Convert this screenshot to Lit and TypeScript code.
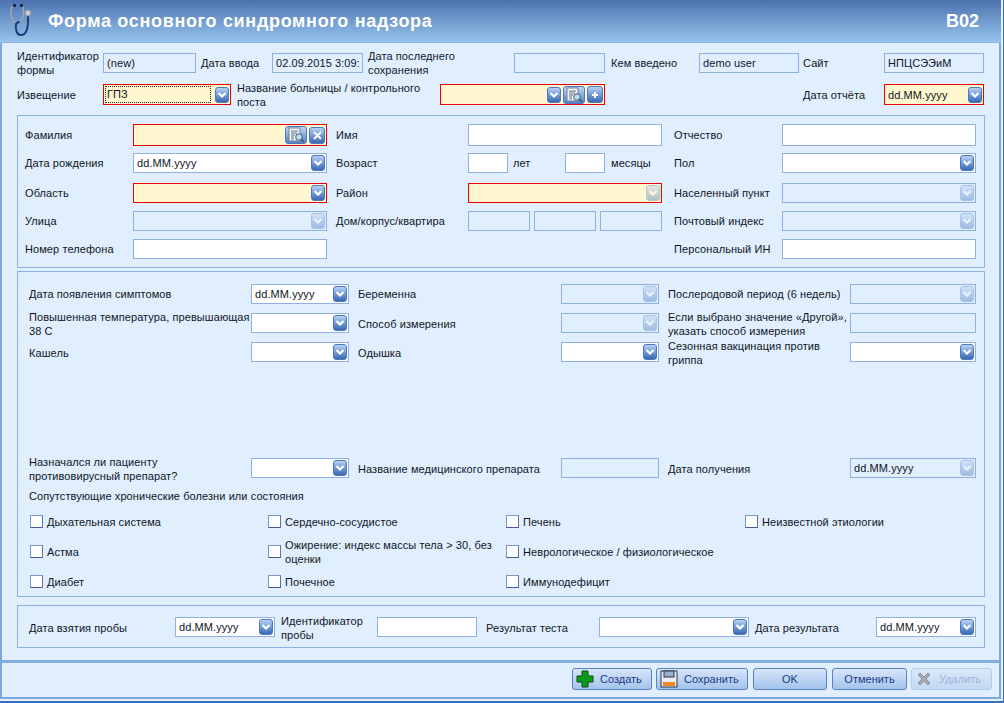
import { LitElement, html, css, svg } from "lit";
import { customElement } from "lit/decorators.js";

const searchIcon = html`<svg width="20" height="16" viewBox="0 0 20 16"><rect x="3" y="1" width="11" height="13" fill="#f4f7fb" stroke="#6d7f98"/><path d="M5 4h7M5 6h6M5 8h4M5 10h3M5 12h3" stroke="#5a6a82"/><circle cx="13" cy="10" r="3.200" fill="#bfe0f2" stroke="#5b7590" stroke-width="1.200"/><path d="M15 12l3 3" stroke="#3d5069" stroke-width="1.600"/></svg>`;
const chevron = html`<svg width="10" height="8" viewBox="0 0 10 8"><path d="M1.500 2 L5 5.500 L8.500 2" fill="none" stroke="#fff" stroke-width="2.200"/></svg>`;
const xIcon = html`<svg width="9" height="9" viewBox="0 0 9 9"><path d="M1 1L8 8M8 1L1 8" stroke="#fff" stroke-width="1.800"/></svg>`;
const plusSmall = html`<svg width="8" height="8" viewBox="0 0 8 8"><path d="M4 1v6M1 4h6" stroke="#fff" stroke-width="2"/></svg>`;

@customElement("app-root")
export class AppRoot extends LitElement {
  static styles = css`
    :host { display: block; width: 1004px; height: 703px; overflow: hidden; background: #e6f1fd;
      font: 11px "Liberation Sans", Arial, sans-serif; color: #10161f; letter-spacing: 0.08px; }
    * { box-sizing: border-box; }
    .outer { width: 1004px; height: 703px; border-right: 1px solid #3f6fb4; border-bottom: 2px solid #3f6fb4; padding: 0 2px 2px 0; }
    .win { height: 699px; border-left: 2px solid #7aa9e2; border-right: 2px solid #7aa9e2; border-bottom: 2px solid #7aa9e2; background: #e0eefd; display: flex; flex-direction: column; }
    .head { height: 43px; margin: 0 -2px; padding: 0 22px 0 48px; flex: none; display: flex; align-items: center; justify-content: space-between; color: #fff; font-size: 18px; font-weight: 700; letter-spacing: 0.68px;
      background: linear-gradient(#4c72af, #96c4ec); border-bottom: 1px solid #8db5e6; position: relative; }
    .head svg { position: absolute; left: 0; top: 0; }
    .head .code { font-size: 18px; letter-spacing: 0; }
    .body { padding: 10px 14px 0 15px; }

    .row { display: grid; align-items: center; grid-template-rows: 20px; }
    .row.tall { grid-template-rows: 22px; }
    .lbl { line-height: 14px; }
    .lo .lbl { padding-top: 2px; }
    .f { display: flex; align-items: center; height: 100%; border: 1px solid #8eb0e3; padding: 0 3px 0 3px; background: #e0eefd; gap: 2px; overflow: hidden; white-space: nowrap; }
    .f .v { flex: 1; overflow: hidden; }
    .f.w { background: #fff; }
    .f.req { background: #fff7cf; border-color: #f00000; }
    .dot { outline: 1px dotted #222; outline-offset: -1px; margin: 1px 2px 1px -2px; padding-left: 2px; height: 17px; line-height: 16px; }
    .btn { flex: none; width: 14px; height: 16px; border-radius: 3px; border: 1px solid #4d78ba; display: flex; align-items: center; justify-content: center; background: linear-gradient(#b9d2f2 0, #7fa6de 40%, #3a68b2 100%); }
    .btn.dis { opacity: .38; }
    .btn.wide { width: 22px; height: 18px; background: linear-gradient(#c2d7f3, #7ea3d9 60%, #5681c2); }
    .btn.sq { width: 16px; height: 17px; }
    .f.np { padding-right: 1px; }

    .r1 { grid-template-columns: 86px 93px 76px 91px 151px 91px 94px 100px 85px 100px; }
    .r2 { grid-template-columns: 86px 128px 209px 165px 198px 81px 100px; grid-template-rows: 21px; margin-top: 11px; }
    .pl5 { padding-left: 5px; } .pl6 { padding-left: 6px; } .pl4 { padding-left: 4px; } .pl9 { padding-left: 9px; } .pl12 { padding-left: 12px; }

    .panel { border: 1px solid #8eb0e3; }
    .p1 { margin-top: 10px; padding: 8px 7px 8px 7px; }
    .p1 .row { grid-template-columns: 108px 194px 141px 194px 120px 194px; }
    .m7 { margin-top: 7px; } .m8 { margin-top: 8px; } .m10 { margin-top: 10px; } .m9 { margin-top: 9px; } .m96 { margin-top: 96px; } .m11 { margin-top: 11px; }
    .age { display: grid; grid-template-columns: 40px 57px 40px 57px; align-items: center; height: 100%; }
    .house { display: grid; grid-template-columns: 62px 62px 62px; gap: 4px; height: 100%; }

    .p2 { margin-top: 3px; padding: 12px 7px 8px 11px; }
    .p2 .row { grid-template-columns: 222px 98px 212px 98px 191px 126px; }
    .chk { display: grid; grid-template-columns: 238px 238px 239px 220px; margin-left: 1px; align-items: center; }
    .ci { display: flex; align-items: center; gap: 4px; line-height: 14px; }
    .ci .t { padding-top: 1px; }
    .box { flex: none; width: 13px; height: 13px; background: #fff; border: 1px solid #7d96c8; border-right-color: #5a72b0; border-bottom-color: #44589e; }
    .h14 { height: 14px; } .h28 { height: 28px; }

    .p3 { margin-top: 8px; padding: 11px 7px 10px 11px; }
    .p3 .row { grid-template-columns: 146px 100px 102px 100px 122px 150px 127px 100px; }

    .sep { height: 3px; background: #84aee2; margin-top: 12px; flex: none; }
    .foot { display: flex; padding: 5px 7px 0 0; justify-content: flex-end; flex: none; }
    .b { height: 22px; border: 1px solid #5a82c4; border-radius: 3px; background: linear-gradient(#d6e5f9, #a4c4ec); color: #1d3a86; display: flex; align-items: center; justify-content: flex-start; padding-left: 3px; gap: 6px; margin-left: 4px; letter-spacing: 0; }
    .b.c { justify-content: center; padding-left: 0; }
    .b.dis { border-color: #b4cbe9; background: linear-gradient(#dbe8f9, #c2d8f2); color: #9db4d8; }
    .ml5 { margin-left: 5px; }
    .w80 { width: 80px; } .w92 { width: 92px; } .w74 { width: 74px; } .w75 { width: 75px; } .w81 { width: 81px; }
  `;

  private lbl(t: string, cls = "") { return html`<div class="lbl ${cls}">${t}</div>`; }
  private inp(v = "", cls = "") { return html`<div class="f ${cls}"><span class="v">${v}</span></div>`; }
  private sel(v = "", cls = "w") {
    return html`<div class="f np ${cls}"><span class="v">${v}</span><span class="btn ${cls === "" ? "dis" : ""}">${chevron}</span></div>`;
  }
  private dis() { return this.sel("", ""); }
  private cb(t: string) { return html`<div class="ci"><span class="box"></span><span class="t">${t}</span></div>`; }

  render() {
    return html`<div class="outer"><div class="win">
      <div class="head">
        <svg width="34" height="40" viewBox="0 0 34 40" fill="none">
          <path d="M15 5C11 6 10 12 11 16C12 20 14 22 16 24" stroke="#9aa6b3" stroke-width="1.600"/>
          <path d="M21 5C24 7 24 13 23 17C22.500 19 21 20.500 19.500 21.500" stroke="#9aa6b3" stroke-width="1.600"/>
          <path d="M19.500 21.500C18 22.500 17 23 16 24C15 30 17 35 21 35C27 35 28 28 28 20V16" stroke="#1d3f78" stroke-width="2"/>
          <rect x="13" y="4" width="3" height="3" fill="#1b2a44"/><rect x="20" y="4" width="3" height="3" fill="#1b2a44"/>
          <circle cx="28" cy="13" r="3" fill="#c8ced4" stroke="#8d98a6"/>
        </svg>
        <span>Форма основного синдромного надзора</span><span class="code">B02</span>
      </div>
      <div class="body">
        <div class="row r1">
          ${this.lbl("Идентификатор формы")}${this.inp("(new)")}${this.lbl("Дата ввода", "pl5")}${this.inp("02.09.2015 3:09:33")}
          ${this.lbl("Дата последнего сохранения", "pl5")}${this.inp()}${this.lbl("Кем введено", "pl6")}${this.inp("demo user")}
          ${this.lbl("Сайт", "pl4")}${this.inp("НПЦСЭЭиМ")}
        </div>
        <div class="row r2">
          ${this.lbl("Извещение")}
          <div class="f np req"><span class="v dot">ГПЗ</span><span class="btn">${chevron}</span></div>
          ${this.lbl("Название больницы / контрольного поста", "pl6")}
          <div class="f np req"><span class="v"></span><span class="btn">${chevron}</span><span class="btn wide">${searchIcon}</span><span class="btn sq">${plusSmall}</span></div>
          <div></div>
          ${this.lbl("Дата отчёта")}
          ${this.sel("dd.MM.yyyy", "req")}
        </div>
        <div class="panel p1">
          <div class="row tall">
            ${this.lbl("Фамилия")}
            <div class="f np req"><span class="v"></span><span class="btn wide">${searchIcon}</span><span class="btn sq">${xIcon}</span></div>
            ${this.lbl("Имя", "pl9")}${this.inp("", "w")}${this.lbl("Отчество", "pl12")}${this.inp("", "w")}
          </div>
          <div class="row m7">
            ${this.lbl("Дата рождения")}${this.sel("dd.MM.yyyy")}${this.lbl("Возраст", "pl9")}
            <div class="age">${this.inp("", "w")}${this.lbl("лет", "pl5")}${this.inp("", "w")}${this.lbl("месяцы", "pl6")}</div>
            ${this.lbl("Пол", "pl12")}${this.sel()}
          </div>
          <div class="row m10">
            ${this.lbl("Область")}${this.sel("", "req")}${this.lbl("Район", "pl9")}
            <div class="f np req"><span class="v"></span><span class="btn dis">${chevron}</span></div>
            ${this.lbl("Населенный пункт", "pl12")}${this.dis()}
          </div>
          <div class="row m8">
            ${this.lbl("Улица")}${this.dis()}${this.lbl("Дом/корпус/квартира", "pl9")}
            <div class="house">${this.inp()}${this.inp()}${this.inp()}</div>
            ${this.lbl("Почтовый индекс", "pl12")}${this.dis()}
          </div>
          <div class="row m8">
            ${this.lbl("Номер телефона")}${this.inp("", "w")}<div></div><div></div>${this.lbl("Персональный ИН", "pl12")}${this.inp("", "w")}
          </div>
        </div>
        <div class="panel p2">
          <div class="row">
            ${this.lbl("Дата появления симптомов")}${this.sel("dd.MM.yyyy")}${this.lbl("Беременна", "pl9")}${this.dis()}
            ${this.lbl("Послеродовой период (6 недель)", "pl9")}${this.dis()}
          </div>
          <div class="row lo m9">
            ${this.lbl("Повышенная температура, превышающая 38 С")}${this.sel()}${this.lbl("Способ измерения", "pl9")}${this.dis()}
            ${this.lbl("Если выбрано значение «Другой», указать способ измерения", "pl9")}${this.inp()}
          </div>
          <div class="row lo m9">
            ${this.lbl("Кашель")}${this.sel()}${this.lbl("Одышка", "pl9")}${this.sel()}
            ${this.lbl("Сезонная вакцинация против гриппа", "pl9")}${this.sel()}
          </div>
          <div class="row lo m96">
            ${this.lbl("Назначался ли пациенту противовирусный препарат?")}${this.sel()}${this.lbl("Название медицинского препарата", "pl9")}${this.inp()}
            ${this.lbl("Дата получения", "pl9")}${this.sel("dd.MM.yyyy", "")}
          </div>
          ${this.lbl("Сопутствующие хронические болезни или состояния", "m11")}
          <div class="chk h14 m11">${this.cb("Дыхательная система")}${this.cb("Сердечно-сосудистое")}${this.cb("Печень")}${this.cb("Неизвестной этиологии")}</div>
          <div class="chk h28 m9">${this.cb("Астма")}${this.cb("Ожирение: индекс массы тела > 30, без оценки")}${this.cb("Неврологическое / физиологическое")}<div></div></div>
          <div class="chk h14 m9">${this.cb("Диабет")}${this.cb("Почечное")}${this.cb("Иммунодефицит")}<div></div></div>
        </div>
        <div class="panel p3">
          <div class="row lo">
            ${this.lbl("Дата взятия пробы")}${this.sel("dd.MM.yyyy")}${this.lbl("Идентификатор пробы", "pl6")}${this.inp("", "w")}
            ${this.lbl("Результат теста", "pl9")}${this.sel()}${this.lbl("Дата результата", "pl6")}${this.sel("dd.MM.yyyy")}
          </div>
        </div>
      </div>
      <div class="sep"></div>
      <div class="foot">
        <div class="b w80"><svg width="18" height="18" viewBox="0 0 18 18">${svg`<path d="M6 1h6v5h5v6h-5v5H6v-5H1V6h5z" fill="#0c9a1c" stroke="#0a4a10"/>`}</svg>Создать</div>
        <div class="b w92"><svg width="18" height="18" viewBox="0 0 18 18">${svg`<rect x="1" y="1" width="16" height="16" fill="#e9eef5" stroke="#24364f"/><rect x="4" y="1" width="10" height="6" fill="#9bb0c8" stroke="#24364f"/><rect x="3" y="12" width="12" height="4" fill="#f28a1e"/>`}</svg>Сохранить</div>
        <div class="b c w74 ml5">OK</div>
        <div class="b c w75 ml5">Отменить</div>
        <div class="b w81 dis"><svg width="18" height="18" viewBox="0 0 18 18">${svg`<path d="M3 5l2-2 4 4 4-4 2 2-4 4 4 4-2 2-4-4-4 4-2-2 4-4z" fill="#a6a9ad" stroke="#8e9298"/>`}</svg>Удалить</div>
      </div>
    </div></div>`;
  }
}
